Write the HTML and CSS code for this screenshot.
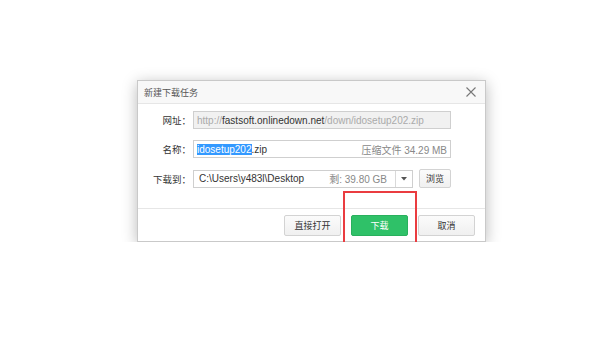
FILE: index.html
```html
<!DOCTYPE html>
<html lang="zh-CN">
<head>
    <meta charset="UTF-8">
    <title>新建下载任务</title>
    <link rel="stylesheet" href="styles.css">
</head>
<body>
    <div class="dialog">
        <div class="titlebar">
            <span class="title">新建下载任务</span>
            <svg class="close" width="10" height="10" viewBox="0 0 10 10">
                <path d="M0.5 0.5L9.5 9.5M9.5 0.5L0.5 9.5" stroke="#777" stroke-width="1.1" fill="none"/>
            </svg>
        </div>
        <div class="body">
            <div class="row">
                <label class="label">网址：</label>
                <div class="field url">
                    <span class="dim">http://</span><span class="host">fastsoft.onlinedown.net</span><span class="dim">/down/idosetup202.zip</span>
                </div>
            </div>
            <div class="row">
                <label class="label">名称：</label>
                <div class="field">
                    <span class="name"><span class="sel">idosetup202</span>.zip</span>
                    <span class="info">压缩文件 34.29 MB</span>
                </div>
            </div>
            <div class="row">
                <label class="label">下载到：</label>
                <div class="field select">
                    <span class="path">C:\Users\y483l\Desktop</span>
                    <span class="info">剩: 39.80 GB</span>
                    <span class="arrow">
                        <svg width="6" height="4" viewBox="0 0 6 4"><path d="M0 0H6L3 3.5Z" fill="#555"/></svg>
                    </span>
                </div>
                <button class="btn small">浏览</button>
            </div>
        </div>
        <div class="footer">
            <button class="btn">直接打开</button>
            <button class="btn primary">下载</button>
            <button class="btn">取消</button>
        </div>
        <div class="highlight"></div>
    </div>
</body>
</html>
```
FILE: styles.css
```css
* {
    box-sizing: border-box;
}
body {
    margin: 0;
    background-color: #ffffff;
    font-family: "Liberation Sans", "Noto Sans CJK SC", sans-serif;
    font-size: 10px;
    color: #333333;
    padding: 80px 0 0 137px;
}
.dialog {
    position: relative;
    width: 349px;
    background-color: #ffffff;
    border: 1px solid #c9c9c9;
    box-shadow: 0 3px 14px rgba(0, 0, 0, 0.28);
}
.titlebar {
    height: 23px;
    display: flex;
    align-items: center;
    justify-content: space-between;
    padding: 0 9px 0 6px;
    background-color: #f8f8f8;
    border-bottom: 1px solid #e6e6e6;
}
.title {
    font-family: "Noto Sans CJK SC", sans-serif;
    font-size: 9px;
    color: #555555;
}
.body {
    padding: 7px 0 20px 0;
    display: flex;
    flex-direction: column;
    gap: 11px;
}
.row {
    display: flex;
    align-items: center;
}
.label {
    width: 53px;
    text-align: right;
    margin-right: 2px;
    font-family: "Noto Sans CJK SC", sans-serif;
    font-size: 9.5px;
    color: #333333;
}
.field {
    width: 258px;
    height: 18px;
    border: 1px solid #cfcfcf;
    display: flex;
    align-items: center;
    justify-content: space-between;
    padding: 0 1px 0 3px;
    white-space: nowrap;
    overflow: hidden;
}
.url {
    background-color: #f1f1f1;
    justify-content: flex-start;
}
.dim {
    color: #aaaaaa;
}
.host {
    color: #333333;
}
.sel {
    background-color: #3399ff;
    color: #ffffff;
}
.info {
    color: #888888;
    padding-right: 2px;
}
.select {
    width: 220px;
    padding-right: 0;
    padding-left: 5px;
}
.path {
    flex: 1;
}
.select .info {
    padding-right: 8px;
}
.arrow {
    width: 17px;
    height: 16px;
    border-left: 1px solid #d9d9d9;
    display: flex;
    align-items: center;
    justify-content: center;
}
.btn {
    font-family: "Noto Sans CJK SC", sans-serif;
    font-size: 9px;
    color: #333333;
    background: linear-gradient(#fbfbfb, #f0f0f0);
    border: 1px solid #d3d3d3;
    border-radius: 2px;
    height: 21px;
    width: 57px;
    padding: 0;
}
.btn.small {
    width: 32px;
    height: 19px;
    margin-left: 6px;
}
.footer {
    border-top: 1px solid #e6e6e6;
    height: 33px;
    display: flex;
    align-items: center;
    justify-content: flex-end;
    gap: 10px;
    padding-right: 10px;
}
.btn.primary {
    background: #2fc168;
    border-color: #29b05d;
    color: #ffffff;
}
.highlight {
    position: absolute;
    left: 205px;
    top: 110px;
    width: 74px;
    height: 55px;
    border: 2px solid #ea3c40;
}
```
